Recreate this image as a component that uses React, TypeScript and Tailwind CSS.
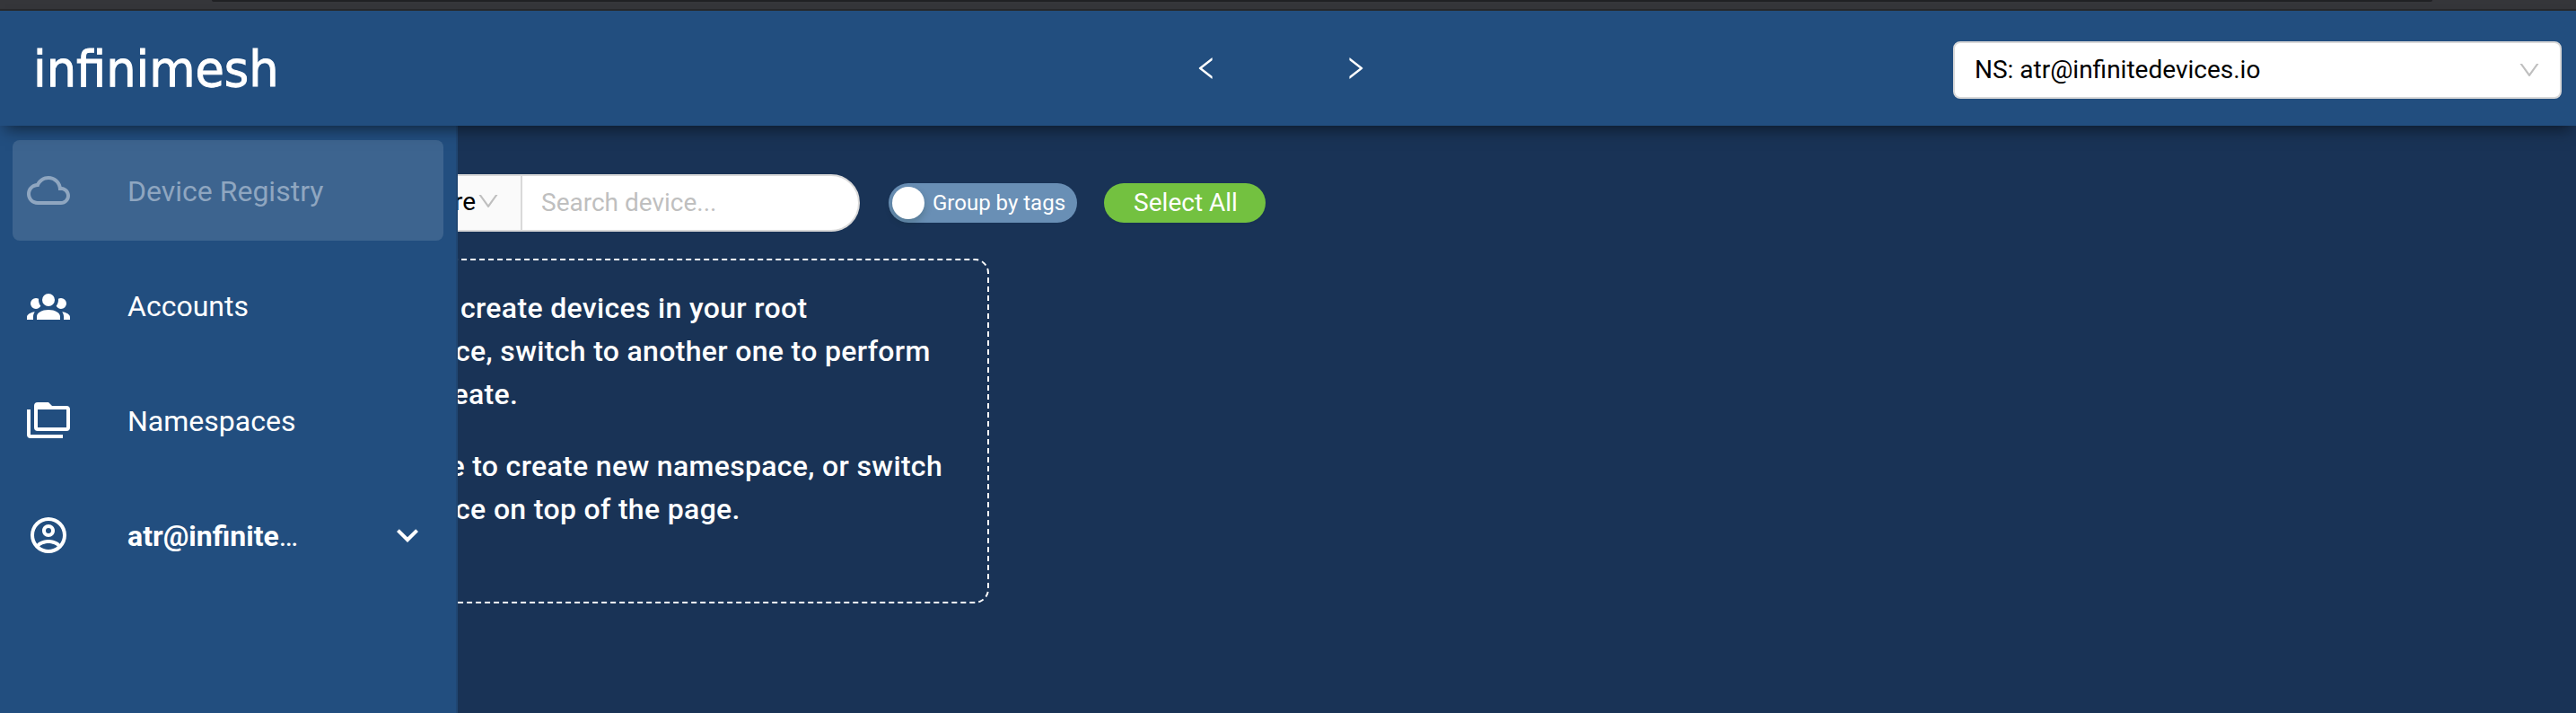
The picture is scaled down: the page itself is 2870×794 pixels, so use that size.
import type { ReactNode } from "react";
import { AiOutlineDown, AiOutlineLeft, AiOutlineRight } from "react-icons/ai";

const CLOUD =
  "M19.35 10.04C18.67 6.59 15.64 4 12 4 9.11 4 6.6 5.64 5.35 8.04 2.34 8.36 0 10.91 0 14c0 3.31 2.69 6 6 6h13c2.76 0 5-2.24 5-5 0-2.64-2.05-4.78-4.65-4.96zM19 18H6c-2.21 0-4-1.79-4-4s1.79-4 4-4h.71C7.37 7.69 9.48 6 12 6c3.04 0 5.5 2.46 5.5 5.5v.5H19c1.66 0 3 1.34 3 3s-1.34 3-3 3z";
const GROUP =
  "M12,5.5A3.5,3.5 0 0,1 15.5,9A3.5,3.5 0 0,1 12,12.5A3.5,3.5 0 0,1 8.5,9A3.5,3.5 0 0,1 12,5.5M5,8C5.56,8 6.08,8.15 6.53,8.42C6.38,9.85 6.8,11.27 7.66,12.38C7.16,13.34 6.16,14 5,14A3,3 0 0,1 2,11A3,3 0 0,1 5,8M19,8A3,3 0 0,1 22,11A3,3 0 0,1 19,14C17.84,14 16.84,13.34 16.34,12.38C17.2,11.27 17.62,9.85 17.47,8.42C17.92,8.15 18.44,8 19,8M5.5,18.25C5.5,16.18 8.41,14.5 12,14.5C15.59,14.5 18.5,16.18 18.5,18.25V20H5.5V18.25M0,20V18.5C0,17.11 1.89,15.94 4.45,15.6C3.86,16.28 3.5,17.22 3.5,18.25V20H0M24,20H20.5V18.25C20.5,17.22 20.14,16.28 19.55,15.6C22.11,15.94 24,17.11 24,18.5V20Z";
const FOLDERS =
  "M22,4A2,2 0 0,1 24,6V16A2,2 0 0,1 22,18H6A2,2 0 0,1 4,16V4A2,2 0 0,1 6,2H12L14,4H22M2,6V20H20V22H2A2,2 0 0,1 0,20V6H2M6,6V16H22V6H6Z";
const USER =
  "M12,2A10,10 0 0,0 2,12A10,10 0 0,0 12,22A10,10 0 0,0 22,12A10,10 0 0,0 12,2M7.07,18.28C7.5,17.38 10.12,16.5 12,16.5C13.88,16.5 16.5,17.38 16.93,18.28C15.57,19.36 13.86,20 12,20C10.14,20 8.43,19.36 7.07,18.28M18.36,16.83C16.93,15.09 13.46,14.5 12,14.5C10.54,14.5 7.07,15.09 5.64,16.83C4.62,15.5 4,13.82 4,12C4,7.59 7.59,4 12,4C16.41,4 20,7.59 20,12C20,13.82 19.38,15.5 18.36,16.83M12,6C10.06,6 8.5,7.56 8.5,9.5C8.5,11.44 10.06,13 12,13C13.94,13 15.5,11.44 15.5,9.5C15.5,7.56 13.94,6 12,6M12,11A1.5,1.5 0 0,1 10.5,9.5A1.5,1.5 0 0,1 12,8A1.5,1.5 0 0,1 13.5,9.5A1.5,1.5 0 0,1 12,11Z";
const CHEVRON = "M7.41,8.58L12,13.17L16.59,8.58L18,10L12,16L6,10L7.41,8.58Z";

function Icon({ d }: { d: string }) {
  return (
    <svg viewBox="0 0 24 24" className="size-12 shrink-0 fill-current">
      <path d={d} />
    </svg>
  );
}

function NavItem({ icon, active, children }: { icon: string; active?: boolean; children: ReactNode }) {
  return (
    <a
      className={
        active
          ? "flex h-28 items-center rounded-lg bg-white/[0.125] pr-4 pl-4 text-[#8fa6c0]"
          : "flex h-28 items-center rounded-lg pr-4 pl-4 text-white"
      }
    >
      <Icon d={icon} />
      <span className="flex flex-1 items-center justify-between pt-0.5 pl-16">{children}</span>
    </a>
  );
}

function BrowserEdge() {
  return (
    <div className="h-3 border-b-2 border-[#28292b] bg-[#35363a] pr-[160px] pl-[236px]">
      <div className="h-0.5 rounded-b-full bg-[#202124]" />
    </div>
  );
}

function Header() {
  return (
    <header className="relative z-10 flex h-32 items-center justify-between bg-[#224e7f] pr-4 pl-[37px] shadow-[0_10px_16px_-6px_rgba(0,0,0,0.5)]">
      <div className="w-[1291px] pt-px">
        <span className="inline-block origin-left scale-x-[0.94] font-['DejaVu_Sans',sans-serif] text-[56px] leading-none text-white [-webkit-text-stroke:1px_white]">
          infinimesh
        </span>
      </div>
      <nav className="flex flex-1 gap-[134px] text-[32px] text-white">
        <AiOutlineLeft />
        <AiOutlineRight />
      </nav>
      <div className="mt-1 flex h-16 w-[678px] items-center justify-between rounded-lg border-2 border-[#d9d9d9] bg-white pr-5 pl-[22px] text-[28px] text-black">
        <span>NS: atr@infinitedevices.io</span>
        <AiOutlineDown className="text-[#bfbfbf]" />
      </div>
    </header>
  );
}

function Sidebar() {
  return (
    <aside className="flex w-[510px] shrink-0 flex-col gap-4 border-r-2 border-[#204672] bg-[#224e7f] pt-4 pr-3.5 pl-3.5 text-[32px]">
      <NavItem icon={CLOUD} active>
        Device Registry
      </NavItem>
      <NavItem icon={GROUP}>Accounts</NavItem>
      <NavItem icon={FOLDERS}>Namespaces</NavItem>
      <NavItem icon={USER}>
        <span className="block w-[192px] truncate">
          <b>atr@infinite</b>…
        </span>
        <span className="-mt-0.5">
          <Icon d={CHEVRON} />
        </span>
      </NavItem>
    </aside>
  );
}

function Toolbar() {
  return (
    <div className="flex h-16 items-center">
      <div className="flex h-16 w-[610px] overflow-hidden rounded-full border-2 border-[#d9d9d9] bg-white text-[28px]">
        <div className="flex w-[232px] items-center justify-end border-r-2 border-[#d9d9d9] bg-[#fafafa] pr-[22px]">
          <span className="-mt-[3px] text-black">Anywhere</span>
          <AiOutlineDown className="-mt-1 text-[#bfbfbf]" />
        </div>
        <div className="flex flex-1 items-center pl-[21px] text-[#bfbfbf]">Search device...</div>
      </div>
      <div className="ml-8 flex h-11 w-[210px] items-center gap-[9px] rounded-full bg-[#698fb5] pl-1 text-2xl text-white">
        <span className="size-9 shrink-0 rounded-full bg-white shadow-[0_4px_8px_rgba(0,35,11,0.2)]" />
        Group by tags
      </div>
      <button className="ml-[30px] h-11 w-[180px] rounded-full bg-[#73c140] pl-0.5 text-[28px] leading-none text-white shadow-[0_4px_0_rgba(0,0,0,0.02)]">
        Select All
      </button>
    </div>
  );
}

function Notice() {
  return (
    <section className="mt-[30px] h-96 w-[754px] rounded-2xl border-2 border-dashed border-white pt-[29px] pl-[23px] text-[32px] leading-[48px] font-medium tracking-[0.33px] whitespace-nowrap text-white">
      <p>
        You can't create devices in your root
        <br />
        namespace, switch to another one to perform
        <br />
        device create.
      </p>
      <p className="mt-8">
        Click here to create new namespace, or switch
        <br />
        namespace on top of the page.
      </p>
    </section>
  );
}

export default function App() {
  return (
    <div className="flex h-[794px] w-full flex-col overflow-hidden bg-[#193356] font-[Roboto,sans-serif]">
      <BrowserEdge />
      <Header />
      <div className="flex min-h-0 flex-1">
        <Sidebar />
        <main className="flex-1 overflow-hidden pt-[54px]">
          <div className="-ml-[162px]">
            <Toolbar />
            <Notice />
          </div>
        </main>
      </div>
    </div>
  );
}
